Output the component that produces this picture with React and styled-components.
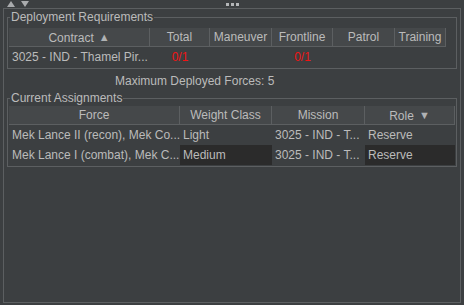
import styled, { createGlobalStyle } from "styled-components";

const GlobalStyle = createGlobalStyle`
  body {
    margin: 0;
    background: #3c3f41;
    font-family: "Liberation Sans", Arial, sans-serif;
    font-size: 12px;
    color: #bbbbbb;
  }
`;

const Frame = styled.div`
  width: 464px;
  height: 305px;
  background: #3c3f41;
  display: flex;
  flex-direction: column;
  overflow: hidden;
`;

const Divider = styled.div`
  height: 8px;
  display: grid;
  grid-template-columns: 1fr auto 1fr;
  align-items: center;
`;

const Arrows = styled.div`
  display: flex;
  gap: 6px;
  padding-left: 7px;
  svg {
    display: block;
  }
`;

const Dots = styled.div`
  display: flex;
  gap: 2px;
  padding-left: 1px;
  span {
    width: 3px;
    height: 3px;
    background: #b4b6b8;
  }
`;

const Outer = styled.div`
  flex: 1;
  margin: 0 3px 2px 3px;
  border: 1px solid #5c5f61;
  padding: 1px 3px 0 3px;
  display: flex;
  flex-direction: column;
`;

const Group = styled.fieldset`
  margin: 0;
  padding: ${(p) => p.$top}px 1px 1px 1px;
  border: 1px solid #5c5f61;
  min-width: 0;
`;

const Legend = styled.legend`
  margin-left: 1px;
  padding: 0 1px;
  line-height: 14px;
  color: #bbbbbb;
`;

const Table = styled.div`
  width: ${(p) => p.$width}px;
  display: grid;
  grid-template-columns: ${(p) => p.$cols};
`;

const HeadCell = styled.div`
  height: 19px;
  line-height: 19px;
  background: #45484a;
  border-right: 1px solid #5c5f61;
  border-bottom: 1px solid #5c5f61;
  box-sizing: border-box;
  text-align: center;
  white-space: nowrap;
  overflow: hidden;
  color: #bbbbbb;
`;

const SortMark = styled.span`
  font-size: 11px;
  margin-left: 5px;
  color: #b0b2b4;
  vertical-align: 1px;
`;

const Cell = styled.div`
  height: 20px;
  line-height: 20px;
  padding: 0 3px;
  white-space: nowrap;
  overflow: hidden;
  text-align: ${(p) => (p.$center ? "center" : "left")};
  color: ${(p) => (p.$red ? "#f01414" : "#bbbbbb")};
  background: ${(p) => (p.$dark ? "#2b2b2b" : "transparent")};
`;

const Summary = styled.div`
  height: 22px;
  line-height: 25px;
  padding-left: 108px;
`;

const reqCols = "141px 60px 62px 61px 62px 51px";
const asgCols = "171px 92px 93px 90px";

function Triangle({ down }) {
  return (
    <svg width="8" height="6" viewBox="0 0 8 6">
      <polygon
        points={down ? "0,0 8,0 4,6" : "0,6 8,6 4,0"}
        fill="#a9abad"
      />
    </svg>
  );
}

export default function App() {
  return (
    <Frame>
      <GlobalStyle />
      <Divider>
        <Arrows>
          <Triangle />
          <Triangle down />
        </Arrows>
        <Dots>
          <span />
          <span />
          <span />
        </Dots>
        <div />
      </Divider>
      <Outer>
        <Group $top={4}>
          <Legend>Deployment Requirements</Legend>
          <Table $width={437} $cols={reqCols}>
            <HeadCell>
              Contract<SortMark>▲</SortMark>
            </HeadCell>
            <HeadCell>Total</HeadCell>
            <HeadCell>Maneuver</HeadCell>
            <HeadCell>Frontline</HeadCell>
            <HeadCell>Patrol</HeadCell>
            <HeadCell>Training</HeadCell>
            <Cell>3025 - IND - Thamel Pir...</Cell>
            <Cell $center $red>0/1</Cell>
            <Cell />
            <Cell $center $red>0/1</Cell>
            <Cell />
            <Cell />
          </Table>
        </Group>
        <Summary>Maximum Deployed Forces: 5</Summary>
        <Group $top={1}>
          <Legend>Current Assignments</Legend>
          <Table $width={446} $cols={asgCols}>
            <HeadCell>Force</HeadCell>
            <HeadCell>Weight Class</HeadCell>
            <HeadCell>Mission</HeadCell>
            <HeadCell>
              Role<SortMark>▼</SortMark>
            </HeadCell>
            <Cell>Mek Lance II (recon), Mek Co...</Cell>
            <Cell>Light</Cell>
            <Cell>3025 - IND - T...</Cell>
            <Cell>Reserve</Cell>
            <Cell>Mek Lance I (combat), Mek C...</Cell>
            <Cell $dark>Medium</Cell>
            <Cell>3025 - IND - T...</Cell>
            <Cell $dark>Reserve</Cell>
          </Table>
        </Group>
      </Outer>
    </Frame>
  );
}
